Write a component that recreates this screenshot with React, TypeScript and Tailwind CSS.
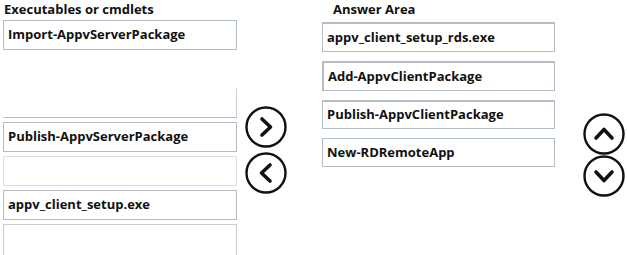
import React from "react";

const font = { fontFamily: '"Open Sans", "Noto Sans", sans-serif' };

function Circle({ dir }: { dir: "right" | "left" | "up" | "down" }) {
  const pts: Record<string, string> = {
    right: "17,13 25.5,21 17,29",
    left: "25,13 16.5,21 25,29",
    up: "13,25 21,16.5 29,25",
    down: "13,17 21,25.5 29,17",
  };
  return (
    <svg width="42" height="42" viewBox="0 0 42 42" className="block shrink-0">
      <circle cx="21" cy="21" r="19.5" fill="white" stroke="#111" strokeWidth="2.4" />
      <polyline points={pts[dir]} fill="none" stroke="#111" strokeWidth="3.6" strokeLinecap="round" strokeLinejoin="round" />
    </svg>
  );
}

function Box({ text, cls }: { text?: string; cls: string }) {
  return (
    <div className={`shrink-0 flex items-center pl-[4px] text-[13px] font-bold text-[#111] ${cls}`}>
      {text}
    </div>
  );
}

export default function App() {
  return (
    <div className="flex w-[627px] h-[255px] bg-white overflow-hidden pl-[3px]" style={font}>
      <div className="w-[234px] flex flex-col shrink-0">
        <div className="shrink-0 h-[20px] pl-[1px] pt-[1px] text-[13px] font-bold text-[#111] leading-[16px]">Executables or cmdlets</div>
        <div className="flex flex-col gap-[4px]">
          <Box text="Import-AppvServerPackage" cls="h-[30px] border border-[#b3bdc7]" />
          <Box cls="h-[30px] border border-transparent" />
          <Box cls="h-[30px] border border-transparent border-r-[#c6ced6] border-b-[#b3bdc7]" />
          <Box text="Publish-AppvServerPackage" cls="h-[30px] border border-[#b3bdc7]" />
          <Box cls="h-[30px] border border-[#d8dee4]" />
          <Box text="appv_client_setup.exe" cls="h-[30px] border border-[#b3bdc7]" />
          <Box cls="h-[40px] border border-[#c6ced6] border-b-0" />
        </div>
      </div>
      <div className="ml-[8px] pt-[106px] flex flex-col gap-[4px] shrink-0">
        <Circle dir="right" />
        <Circle dir="left" />
      </div>
      <div className="ml-[35px] w-[233px] flex flex-col shrink-0">
        <div className="shrink-0 h-[22px] pl-[11px] pt-[1px] text-[13px] font-bold text-[#111] leading-[16px]">Answer Area</div>
        <div className="flex flex-col gap-[9px]">
          <Box text="appv_client_setup_rds.exe" cls="h-[30px] border border-[#b3bdc7] border-t-2" />
          <Box text="Add-AppvClientPackage" cls="h-[30px] border border-[#b3bdc7] border-t-2 border-l-2" />
          <Box text="Publish-AppvClientPackage" cls="h-[29px] border border-[#b3bdc7] border-t-2" />
          <Box text="New-RDRemoteApp" cls="h-[29px] border border-[#b3bdc7]" />
        </div>
      </div>
      <div className="ml-[28px] pt-[113px] flex flex-col gap-0 shrink-0">
        <Circle dir="up" />
        <Circle dir="down" />
      </div>
    </div>
  );
}
